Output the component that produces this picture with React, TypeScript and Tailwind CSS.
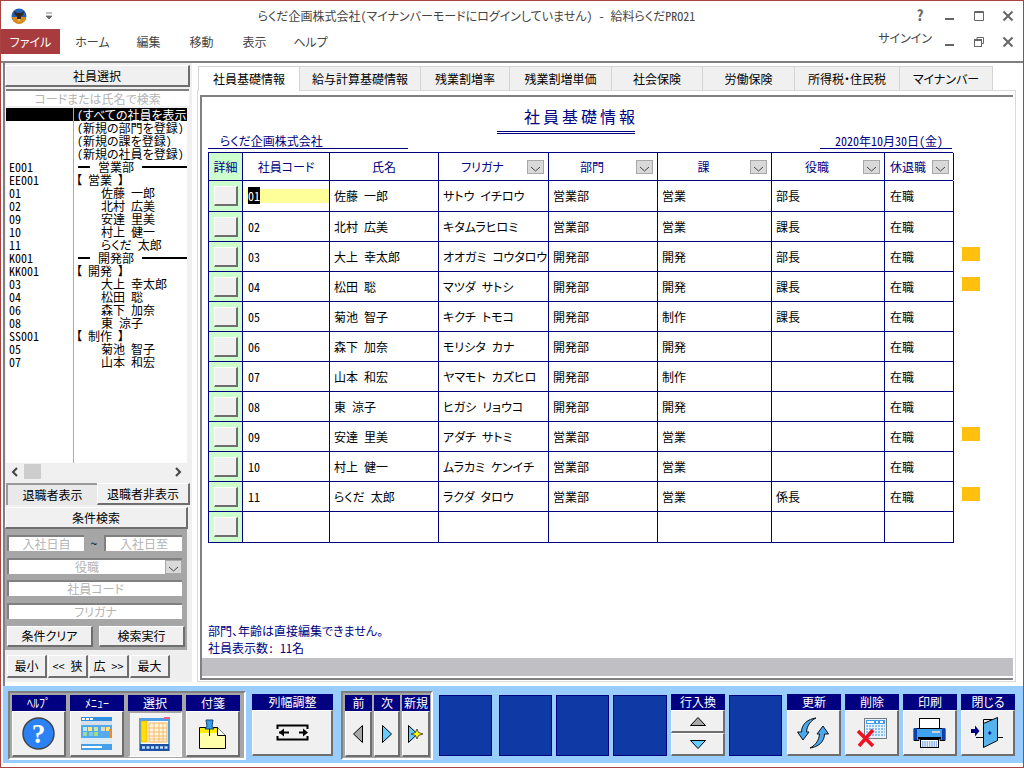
import React from "react";

const raised = "bg-[#f0f0f0] border-t border-l border-t-white border-l-white border-r-2 border-b-2 border-r-[#6e6e6e] border-b-[#6e6e6e]";

const Chevron = () => (
  <svg width="11" height="6" viewBox="0 0 11 6"><path d="M1 1l4.5 4L10 1" fill="none" stroke="#444" strokeWidth="1" /></svg>
);

const Combo = () => (
  <span className="w-[17px] h-[14px] shrink-0 bg-[#d9d9d9] border border-[#a8a8a8] flex items-end justify-center pb-[1px]"><Chevron /></span>
);

const Field = ({ w, text, pr, combo }: { w: string; text: string; pr?: string; combo?: boolean }) => (
  <div className={`${w} h-[16px] bg-white border-t-2 border-l-2 border-t-[#808080] border-l-[#808080] flex items-center text-[#b4b4b4] text-[12px] leading-[14px]`}>
    <span className={`flex-1 text-center ${pr ?? ""}`}>{text}</span>
    {combo && <Combo />}
  </div>
);

const listRows: { code?: string; kind: string; name: string }[] = [
  { kind: "all", name: "（すべての社員を表示）" },
  { kind: "plain", name: "（新規の部門を登録）" },
  { kind: "plain", name: "（新規の課を登録）" },
  { kind: "plain", name: "（新規の社員を登録）" },
  { code: "E001", kind: "sec", name: "営業部" },
  { code: "EE001", kind: "group", name: "【 営業 】" },
  { code: "01", kind: "emp", name: "佐藤 一郎" },
  { code: "02", kind: "emp", name: "北村 広美" },
  { code: "09", kind: "emp", name: "安達 里美" },
  { code: "10", kind: "emp", name: "村上 健一" },
  { code: "11", kind: "emp", name: "らくだ 太郎" },
  { code: "K001", kind: "sec", name: "開発部" },
  { code: "KK001", kind: "group", name: "【 開発 】" },
  { code: "03", kind: "emp", name: "大上 幸太郎" },
  { code: "04", kind: "emp", name: "松田 聡" },
  { code: "06", kind: "emp", name: "森下 加奈" },
  { code: "08", kind: "emp", name: "東 涼子" },
  { code: "SS001", kind: "group", name: "【 制作 】" },
  { code: "05", kind: "emp", name: "菊池 智子" },
  { code: "07", kind: "emp", name: "山本 和宏" },
];

const ListRow = ({ r }: { r: (typeof listRows)[number] }) => {
  const sel = r.kind === "all";
  return (
    <div className={`flex h-[13px] text-[12px] leading-[13px] ${sel ? "bg-black text-white" : "text-black"}`}>
      <div className="w-[68px] shrink-0 pl-[3px] border-r border-r-[#aaaaaa]">{r.code}</div>
      <div className="flex-1 min-w-0 whitespace-nowrap overflow-hidden">
        {r.kind === "sec" ? (
          <div className="flex items-center h-[13px] pl-[4px]">
            <span className="w-[12px] h-[2px] bg-black" />
            <span className="mx-[8px]">{r.name}</span>
            <span className="flex-1 h-[2px] bg-black" />
          </div>
        ) : r.kind === "emp" ? (
          <span className="pl-[27px]">{r.name}</span>
        ) : r.kind === "group" ? (
          <span className="pl-[2px]">{r.name}</span>
        ) : (
          <span className="pl-[3px]">{r.name}</span>
        )}
      </div>
    </div>
  );
};

const Sidebar = () => (
  <aside className="w-[189px] shrink-0 ml-[2px] border-l-2 border-l-[#808080] bg-[#f0f0f0] flex flex-col pt-[2px]">
    <div className={`w-[185px] h-[22px] ${raised} flex items-center justify-center text-[12px]`}>社員選択</div>
    <div className="ml-[1px] mt-[2px] w-[183px] h-[17px] bg-white border-t-2 border-t-[#808080] text-[12px] leading-[15px] text-[#b4b4b4] text-center">コードまたは氏名で検索</div>
    <div className="ml-[1px] mt-[2px] w-[181px] h-[355px] bg-white overflow-hidden flex flex-col">
      {listRows.map((r, i) => (
        <ListRow key={i} r={r} />
      ))}
      <div className="flex-1 flex">
        <div className="w-[68px] border-r border-r-[#aaaaaa]" />
      </div>
    </div>
    <div className="ml-[1px] w-[181px] h-[17px] bg-[#f0f0f0] flex items-center">
      <svg width="12" height="12" viewBox="0 0 12 12" className="ml-[3px]"><path d="M8 2L4 6l4 4" fill="none" stroke="#444" strokeWidth="2" /></svg>
      <span className="ml-[3px] w-[17px] h-[15px] bg-[#cdcdcd]" />
      <span className="flex-1" />
      <svg width="12" height="12" viewBox="0 0 12 12" className="mr-[3px]"><path d="M4 2l4 4-4 4" fill="none" stroke="#444" strokeWidth="2" /></svg>
    </div>
    <div className="mt-[3px] flex h-[22px] text-[12px]">
      <div className="ml-[1px] w-[91px] flex items-center justify-center bg-[#e9e9e9] border-t-2 border-l-2 border-t-[#9a9a9a] border-l-[#9a9a9a]">退職者表示</div>
      <div className={`w-[93px] flex items-center justify-center ${raised}`}>退職者非表示</div>
    </div>
    <div className={`mt-[2px] w-[183px] h-[22px] ${raised} flex items-center justify-center text-[12px]`}>条件検索</div>
    <div className="w-[182px] h-[121px] bg-[#a6a6a6] pt-[6px] pl-[2px] flex flex-col">
      <div className="flex h-[16px]">
        <Field w="w-[77px]" text="入社日自" />
        <span className="w-[20px] text-center text-[12px] leading-[16px]">〜</span>
        <Field w="w-[78px]" text="入社日至" />
      </div>
      <div className="mt-[7px]"><Field w="w-[175px]" text="役職" combo /></div>
      <div className="mt-[6px]"><Field w="w-[175px]" text="社員コード" /></div>
      <div className="mt-[7px]"><Field w="w-[175px]" text="フリガナ" /></div>
      <div className="mt-[7px] flex gap-[6px] text-[12px]">
        <div className={`w-[86px] h-[21px] ${raised} flex items-center justify-center`}>条件クリア</div>
        <div className={`w-[86px] h-[21px] ${raised} flex items-center justify-center`}>検索実行</div>
      </div>
    </div>
    <div className="mt-[1px] w-[187px] h-[31px] bg-[#eeeeee] pt-[4px] pl-[2px] flex gap-[1px] text-[12px]">
      {["最小", "<< 狭", "広 >>", "最大"].map((t) => (
        <div key={t} className={`w-[40px] h-[23px] ${raised} flex items-center justify-center`}>{t}</div>
      ))}
    </div>
    <div className="flex-1 bg-white" />
  </aside>
);

const tabs: [string, string][] = [
  ["社員基礎情報", "w-[102px]"],
  ["給与計算基礎情報", "w-[121px]"],
  ["残業割増率", "w-[89px]"],
  ["残業割増単価", "w-[102px]"],
  ["社会保険", "w-[91px]"],
  ["労働保険", "w-[92px]"],
  ["所得税・住民税", "w-[105px]"],
  ["マイナンバー", "w-[93px]"],
];

const cols = "grid grid-cols-[34px_87px_109px_110px_109px_114px_113px_69px]";

const Head = ({ text, combo }: { text: string; combo?: boolean }) => (
  <div className="border-r border-r-[#000080] flex items-center text-[#000080] text-[12px] pr-[4px]">
    <span className={`flex-1 text-center ${combo ? "pr-[1px]" : "pl-[4px]"}`}>{text}</span>
    {combo && <Combo />}
  </div>
);

const rows: { c: string; n: string; k: string; d: string; s: string; y: string; tag?: boolean }[] = [
  { c: "01", n: "佐藤 一郎", k: "サトウ イチロウ", d: "営業部", s: "営業", y: "部長" },
  { c: "02", n: "北村 広美", k: "キタムラヒロミ", d: "営業部", s: "営業", y: "課長" },
  { c: "03", n: "大上 幸太郎", k: "オオガミ コウタロウ", d: "開発部", s: "開発", y: "部長", tag: true },
  { c: "04", n: "松田 聡", k: "マツダ サトシ", d: "開発部", s: "開発", y: "課長", tag: true },
  { c: "05", n: "菊池 智子", k: "キクチ トモコ", d: "開発部", s: "制作", y: "課長" },
  { c: "06", n: "森下 加奈", k: "モリシタ カナ", d: "開発部", s: "開発", y: "" },
  { c: "07", n: "山本 和宏", k: "ヤマモト カズヒロ", d: "開発部", s: "制作", y: "" },
  { c: "08", n: "東 涼子", k: "ヒガシ リョウコ", d: "開発部", s: "開発", y: "" },
  { c: "09", n: "安達 里美", k: "アダチ サトミ", d: "営業部", s: "営業", y: "", tag: true },
  { c: "10", n: "村上 健一", k: "ムラカミ ケンイチ", d: "営業部", s: "営業", y: "" },
  { c: "11", n: "らくだ 太郎", k: "ラクダ タロウ", d: "営業部", s: "営業", y: "係長", tag: true },
  { c: "", n: "", k: "", d: "", s: "", y: "" },
];

const Cell = ({ t, pl }: { t: string; pl: string }) => (
  <div className={`border-r border-r-[#000080] flex items-center whitespace-nowrap overflow-hidden text-[12px] ${pl}`}>{t}</div>
);

const Row = ({ r, i }: { r: (typeof rows)[number]; i: number }) => (
  <div className="flex">
    <div className={`${cols} ${i === 0 || i === 11 ? "h-[31px]" : "h-[30px]"} border-l border-b border-[#000080]`}>
      <div className="border-r border-r-[#000080] bg-[#ccffcc] flex items-center justify-center">
        <div className={`w-[24px] h-[20px] ${raised}`} />
      </div>
      {i === 0 ? (
        <div className="border-r border-r-[#000080] flex items-center pl-[3px] text-[12px]">
          <div className="flex-1 h-[14px] bg-[#ffff99] pl-[2px] leading-[14px]"><span className="bg-black text-white">01</span></div>
        </div>
      ) : (
        <Cell t={r.c} pl="pl-[5px]" />
      )}
      <Cell t={r.n} pl="pl-[4px]" />
      <Cell t={r.k} pl="pl-[4px]" />
      <Cell t={r.d} pl="pl-[4px]" />
      <Cell t={r.s} pl="pl-[4px]" />
      <Cell t={r.y} pl="pl-[4px]" />
      <Cell t={r.c ? "在職" : ""} pl="pl-[5px]" />
    </div>
    {r.tag && <div className="ml-[8px] mt-[5px] w-[18px] h-[14px] bg-[#ffc00f]" />}
  </div>
);

const Panel = () => (
  <section className="flex-1 min-w-0 flex flex-col pt-[3px]">
    <div className="ml-[6px] h-[24px] flex items-end text-[12px]">
      {tabs.map(([t, w], i) => (
        <div key={t} className={`${w} shrink-0 flex items-center justify-center border-t border-r ${i === 0 ? "h-[25px] bg-white border-l border-[#d4d4d4] relative z-10 mb-[-1px]" : "h-[24px] bg-[#f0f0f0] border-[#d4d4d4]"}`}>{t}</div>
      ))}
    </div>
    <div className="ml-[5px] w-[819px] h-[592px] bg-white border border-[#d9d9d9] pt-[4px] pl-[2px] pb-[1px]">
      <div className="w-[813px] h-full border-t-2 border-l-2 border-b-2 border-[#808080] bg-white flex flex-col">
        <div className="ml-[295px] w-[138px] h-[37px] pt-[9px] pl-[27px] border-b-[3px] border-double border-b-[#000080] text-[#000080] text-[16px] leading-[20px] tracking-[3px] whitespace-nowrap">社員基礎情報</div>
        <div className="ml-[6px] mr-[61px] h-[15px] flex justify-between text-[#000080] text-[12px] leading-[13px]">
          <div className="w-[200px] pl-[12px] border-b border-b-[#000080]">らくだ企画株式会社</div>
          <div className="w-[132px] pl-[15px] border-b border-b-[#000080] whitespace-nowrap">2020年10月30日(金)</div>
        </div>
        <div className="mt-[3px] ml-[6px] flex flex-col">
          <div className={`${cols} w-[745px] h-[29px] border-l border-t border-b border-[#000080]`}>
            <div className="border-r border-r-[#000080] bg-[#ccffcc] flex items-center justify-center text-[#000080] text-[12px]">詳細</div>
            <Head text="社員コード" />
            <Head text="氏名" />
            <Head text="フリガナ" combo />
            <Head text="部門" combo />
            <Head text="課" combo />
            <Head text="役職" combo />
            <Head text="休退職" combo />
          </div>
          {rows.map((r, i) => (
            <Row key={i} r={r} i={i} />
          ))}
        </div>
        <div className="flex-1" />
        <div className="ml-[6px] text-[#000080] text-[12px] leading-[17px]">
          <div>部門、年齢は直接編集できません。</div>
          <div>社員表示数: 11名</div>
        </div>
        <div className="mt-[2px] h-[18px] bg-[#c0c0c4]" />
        <div className="h-[2px] bg-white" />
      </div>
    </div>
  </section>
);

const TB = ({ label, w, pressed, children }: { label: string; w: string; pressed?: boolean; children?: React.ReactNode }) => (
  <div className={`${w} shrink-0 flex flex-col`}>
    <div className="h-[16px] bg-[#000080] text-white text-[12px] leading-[15px] text-center whitespace-nowrap overflow-hidden">{label}</div>
    <div className={`h-[46px] flex items-center justify-center ${pressed ? "bg-[#f3f3f3] border-t-2 border-l-2 border-t-[#a6a6a6] border-l-[#a6a6a6] border-r border-b border-white" : raised}`}>{children}</div>
  </div>
);

const Blue = ({ w, ml }: { w: string; ml: string }) => (
  <div className={`${w} ${ml} h-[61px] mt-[1px] shrink-0 bg-[#0f3aa5] border border-[#000080]`} />
);

const HelpIcon = () => (
  <svg width="33" height="33" viewBox="0 0 33 33">
    <circle cx="16.5" cy="16.5" r="15.5" fill="#2b82f5" stroke="#444" strokeWidth="1.5" />
    <text x="16.5" y="26" textAnchor="middle" fontFamily="'Liberation Serif',serif" fontWeight="700" fontSize="27" fill="#ffffff">?</text>
  </svg>
);

const MenuIcon = () => (
  <svg width="32" height="34" viewBox="0 0 32 34">
    <rect x="0" y="0" width="31" height="33" fill="#e8f4ff" />
    <rect x="0" y="0" width="31" height="4" fill="#2f8fe0" />
    <rect x="1" y="1" width="3" height="2" fill="#fff" /><rect x="5" y="1" width="3" height="2" fill="#fff" /><rect x="9" y="1" width="3" height="2" fill="#fff" />
    <rect x="0" y="4" width="31" height="4" fill="#d5dfea" />
    <rect x="0" y="8" width="31" height="13" fill="#55aaee" />
    <rect x="2" y="10" width="4" height="4" fill="#bfe6ff" /><rect x="7" y="10" width="4" height="4" fill="#ffe680" /><rect x="13" y="10" width="4" height="4" fill="#c4e8a0" /><rect x="20" y="10" width="4" height="4" fill="#e8d8b0" /><rect x="25" y="10" width="4" height="4" fill="#ffe680" />
    <rect x="2" y="15" width="4" height="4" fill="#9fd8a0" /><rect x="8" y="15" width="4" height="4" fill="#7fc8e8" /><rect x="13" y="15" width="4" height="4" fill="#a0e080" />
    <rect x="28" y="12" width="3" height="14" fill="#f08c1e" />
    <rect x="0" y="21" width="31" height="6" fill="#dbeaf7" />
    <rect x="0" y="27" width="31" height="6" fill="#45a0ea" />
    <rect x="1" y="29" width="20" height="2" fill="#ffffff" />
  </svg>
);

const SelectIcon = () => (
  <svg width="33" height="36" viewBox="0 0 33 36">
    <rect x="0" y="1" width="31" height="33" fill="#4f9fe6" />
    <rect x="25" y="0" width="6" height="2" fill="#f06090" />
    <rect x="2" y="4" width="27" height="23" fill="#ffffff" />
    <rect x="2" y="4" width="6" height="21" fill="#ffdf00" stroke="#e8a000" strokeWidth="0.6" />
    <rect x="10" y="6" width="18" height="19" fill="#fff4d8" stroke="#f0b060" strokeWidth="1" />
    <path d="M10 11h18M10 15h18M10 19h18M10 22h18M15 6v19M20 6v19M24 6v19" stroke="#f0b060" strokeWidth="0.8" />
    <rect x="1" y="27" width="29" height="7" fill="#1d4fa0" />
    <path d="M3 30.5h26" stroke="#bfe0ff" strokeWidth="2.5" strokeDasharray="3 1.5" />
  </svg>
);

const NoteIcon = () => (
  <svg width="27" height="31" viewBox="0 0 27 31">
    <path d="M0.5 9.5h18l8 8v13h-26z" fill="#ffffaa" stroke="#000" strokeWidth="1" />
    <rect x="1" y="10" width="17" height="5" fill="#ffee00" />
    <path d="M18.5 9.5v8h8" fill="#ffffff" stroke="#000" strokeWidth="1" />
    <path d="M7 2h7l-1 6 2 3H6l2-3z" fill="#33a0e8" stroke="#114477" strokeWidth="1" />
    <path d="M10.5 11v7" stroke="#000" strokeWidth="1" />
  </svg>
);

const WidthIcon = () => (
  <svg width="33" height="17" viewBox="0 0 33 17">
    <path d="M1.5 5V1.5h30V5M1.5 12v3.500h30V12" fill="none" stroke="#000" strokeWidth="2" />
    <path d="M3 8.500h10M23 8.500h7" stroke="#000" strokeWidth="2" />
    <path d="M3 8.500L8 4.500v8z" fill="#000" />
    <path d="M32 8.500l-5-4v8z" fill="#000" />
  </svg>
);

const Tri = ({ dir, fill }: { dir: "l" | "r" | "u" | "d"; fill: string }) => {
  const d = dir === "l" ? "M9.500 0.500v17L0.500 9z" : dir === "r" ? "M0.500 0.500v17l9-8.500z" : dir === "u" ? "M0.500 8.500h15l-7.500-8z" : "M0.500 0.500h15l-7.500 8z";
  const h = dir === "l" || dir === "r";
  return (
    <svg width={h ? 10 : 16} height={h ? 18 : 9} viewBox={h ? "0 0 10 18" : "0 0 16 9"}>
      <path d={d} fill={fill} stroke="#000" strokeWidth="1" />
    </svg>
  );
};

const NewIcon = () => (
  <svg width="16" height="18" viewBox="0 0 16 18" className="overflow-visible">
    <path d="M0.500 0.500v17l9-8.500z" fill="#66ccff" stroke="#000" strokeWidth="1" />
    <path d="M9 4l1.500 3.500L15 9l-4.500 1.500L9 14l-1.500-3.500L3 9l4.500-1.500z" fill="#ffff00" stroke="#333" strokeWidth="0.8" />
  </svg>
);

const RefreshIcon = () => (
  <svg width="33" height="32" viewBox="0 0 33 32">
    <path d="M19 1C11 2 4.500 7 4.500 15H0.500L6 23l6-8H9.500C10 9 13 4 19 1z" fill="#4aa8ee" stroke="#111" strokeWidth="1" />
    <path d="M13 31c8-1 14.500-6 14.500-14h4L26 9l-6 8h2.500C22 23 19 28 13 31z" fill="#4aa8ee" stroke="#111" strokeWidth="1" />
  </svg>
);

const DeleteIcon = () => (
  <svg width="31" height="29" viewBox="0 0 31 29">
    <rect x="8.500" y="0.500" width="22" height="20" fill="#e8f2ff" stroke="#000" strokeDasharray="1 1" strokeWidth="1" />
    <rect x="10" y="2" width="19" height="4" fill="#3f9be8" />
    <rect x="20" y="3" width="2" height="2" fill="#fff" /><rect x="24" y="3" width="3" height="2" fill="#fff" /><rect x="11" y="3" width="7" height="2" fill="#fff" />
    <path d="M10 8h19M10 11h19M10 14h19M10 17h19" stroke="#6ab4f0" strokeWidth="1.500" strokeDasharray="2 1" />
    <path d="M2 13l15 15M17 12L3 28" stroke="#ee1122" strokeWidth="3.500" />
  </svg>
);

const PrinterIcon = () => (
  <svg width="33" height="30" viewBox="0 0 33 30">
    <rect x="6.500" y="0.500" width="20" height="11" fill="#ffffff" stroke="#000" />
    <path d="M1 10.500h31v12H27v-3H6v3H1z" fill="#3fa2ee" stroke="#000" strokeWidth="1" />
    <rect x="1" y="10" width="3" height="12" fill="#0c3fa8" /><rect x="29" y="10" width="3" height="12" fill="#0c3fa8" />
    <rect x="19" y="13" width="8" height="2" fill="#d0d0d0" />
    <rect x="5" y="19" width="23" height="2" fill="#000" />
    <rect x="7.500" y="21.500" width="18" height="8" fill="#ffffff" stroke="#000" />
    <path d="M9 24h15M9 26h15M9 28h15" stroke="#2a70e0" strokeWidth="1" strokeDasharray="1.500 0.800" />
  </svg>
);

const DoorIcon = () => (
  <svg width="33" height="31" viewBox="0 0 33 31">
    <path d="M0 12h4V8.500L8.500 14 4 19.500V16H0z" fill="#000080" />
    <path d="M5 20.500h27" stroke="#000" strokeWidth="1" />
    <path d="M12.500 20V2.500h9" fill="none" stroke="#000" strokeWidth="1" />
    <path d="M12.500 6.500l14-6v23l-14 7z" fill="#55b4ee" stroke="#000" strokeWidth="1" />
    <path d="M17 16h3.500M18.800 14.300v3.400" stroke="#000080" strokeWidth="1.200" />
  </svg>
);

const Toolbar = () => (
  <div className="h-[77px] shrink-0 ml-[2px] bg-[#99ccff] flex pl-[5px] pt-[5px] items-start">
    <div className="w-[238px] h-[69px] shrink-0 bg-[#a6a6a6] border-t-2 border-l-2 border-t-[#808080] border-l-[#808080] border-r-2 border-b-2 border-r-white border-b-white flex gap-[4px] pl-[2px] pt-[2px]">
      <TB label="ﾍﾙﾌﾟ" w="w-[54px]"><HelpIcon /></TB>
      <TB label="ﾒﾆｭｰ" w="w-[54px]"><MenuIcon /></TB>
      <TB label="選択" w="w-[54px]" pressed><SelectIcon /></TB>
      <TB label="付箋" w="w-[54px]"><NoteIcon /></TB>
    </div>
    <div className="ml-[6px] mt-[3px]"><TB label="列幅調整" w="w-[81px]"><WidthIcon /></TB></div>
    <div className="ml-[8px] w-[92px] h-[69px] shrink-0 bg-[#a6a6a6] border-t-2 border-l-2 border-t-[#808080] border-l-[#808080] border-r-2 border-b-2 border-r-white border-b-white flex gap-[2px] pl-[2px] pt-[2px]">
      <TB label="前" w="w-[27px]"><Tri dir="l" fill="#a8a8a8" /></TB>
      <TB label="次" w="w-[26px]"><Tri dir="r" fill="#66ccff" /></TB>
      <TB label="新規" w="w-[28px]"><NewIcon /></TB>
    </div>
    <div className="flex mt-[3px]">
      <Blue w="w-[53px]" ml="ml-[6px]" />
      <Blue w="w-[53px]" ml="ml-[7px]" />
      <Blue w="w-[53px]" ml="ml-[4px]" />
      <Blue w="w-[54px]" ml="ml-[4px]" />
      <div className="ml-[4px] w-[54px] flex flex-col shrink-0">
        <div className="h-[16px] bg-[#000080] text-white text-[12px] leading-[15px] text-center">行入換</div>
        <div className={`h-[23px] ${raised} border-b flex items-center justify-center`}><Tri dir="u" fill="#a8a8a8" /></div>
        <div className={`h-[23px] ${raised} flex items-center justify-center`}><Tri dir="d" fill="#66ccff" /></div>
      </div>
      <Blue w="w-[53px]" ml="ml-[4px]" />
      <div className="ml-[5px]"><TB label="更新" w="w-[54px]"><RefreshIcon /></TB></div>
      <div className="ml-[4px]"><TB label="削除" w="w-[54px]"><DeleteIcon /></TB></div>
      <div className="ml-[4px]"><TB label="印刷" w="w-[54px]"><PrinterIcon /></TB></div>
      <div className="ml-[4px]"><TB label="閉じる" w="w-[54px]"><DoorIcon /></TB></div>
    </div>
  </div>
);

const Logo = () => (
  <svg width="16" height="16" viewBox="0 0 16 16">
    <circle cx="8" cy="8" r="7.500" fill="#1f5fb5" />
    <path d="M1 9a7 7 0 0 0 14 0z" fill="#d98b1a" />
    <path d="M3 3l3 2h4l3-2-1 4-2 1v3l-2 2-2-2V8L4 7z" fill="#3a2412" />
    <path d="M6 11h4l-2 3z" fill="#f0c070" />
  </svg>
);

const Ctl = ({ kind }: { kind: "min" | "max" | "restore" | "close" }) => (
  <span className="w-[29px] h-[16px] flex items-center justify-center">
    <svg width="12" height="12" viewBox="0 0 12 12">
      {kind === "min" && <rect x="1" y="8" width="9" height="2" fill="#666" />}
      {kind === "max" && <path d="M1.500 1.500h9v9h-9zM1 2.500h10" fill="none" stroke="#666" strokeWidth="1" />}
      {kind === "restore" && (
        <g fill="none" stroke="#666" strokeWidth="1">
          <path d="M4 3V1.500h6.500v6H9" />
          <rect x="1.500" y="3.500" width="7" height="7" />
          <path d="M1.500 4.500h7" />
        </g>
      )}
      {kind === "close" && <path d="M1.500 1.500l9 9M10.500 1.500l-9 9" stroke="#666" strokeWidth="2" />}
    </svg>
  </span>
);

export default function App() {
  return (
    <div className={`w-[1024px] h-[768px] overflow-hidden bg-white border border-[#a94442] flex flex-col text-black font-['Noto_Sans_CJK_JP',sans-serif] [font-feature-settings:"palt","hwid"]`}>
      <header className="h-[28px] shrink-0 flex items-center pt-[1px]">
        <span className="ml-[10px]"><Logo /></span>
        <svg width="8" height="7" viewBox="0 0 8 7" className="ml-[18px]"><path d="M1 1h6M1 4h6l-3 3z" fill="#666" stroke="#666" strokeWidth="0.800" /></svg>
        <div className="flex-1 text-center text-[12px] text-[#444] whitespace-nowrap pr-[10px]">らくだ企画株式会社（マイナンバーモードにログインしていません） - 給料らくだPRO21</div>
        <span className="text-[15px] font-bold text-[#666] w-[20px] text-center">?</span>
        <span className="ml-[5px]"><Ctl kind="min" /></span>
        <Ctl kind="max" />
        <Ctl kind="close" />
        <span className="w-[1px]" />
      </header>
      <nav className="h-[25px] shrink-0 flex items-center text-[12px] text-[#444]">
        <div className="w-[59px] h-[25px] bg-[#a83b3e] text-white flex items-center justify-center">ファイル</div>
        <span className="w-[65px] text-center">ホーム</span>
        <span className="w-[47px] text-center">編集</span>
        <span className="w-[59px] text-center">移動</span>
        <span className="w-[47px] text-center">表示</span>
        <span className="w-[65px] text-center">ヘルプ</span>
        <span className="flex-1" />
        <span className="mb-[8px] mr-[1px] text-[12px]">サインイン</span>
        <span className="ml-[2px]"><Ctl kind="min" /></span>
        <Ctl kind="restore" />
        <Ctl kind="close" />
        <span className="w-[1px]" />
      </nav>
      <div className="h-[7px] shrink-0 bg-white" />
      <main className="h-[625px] shrink-0 flex border-t-2 border-t-[#808080] bg-white">
        <Sidebar />
        <Panel />
      </main>
      <Toolbar />
      <div className="flex-1 bg-white" />
    </div>
  );
}
